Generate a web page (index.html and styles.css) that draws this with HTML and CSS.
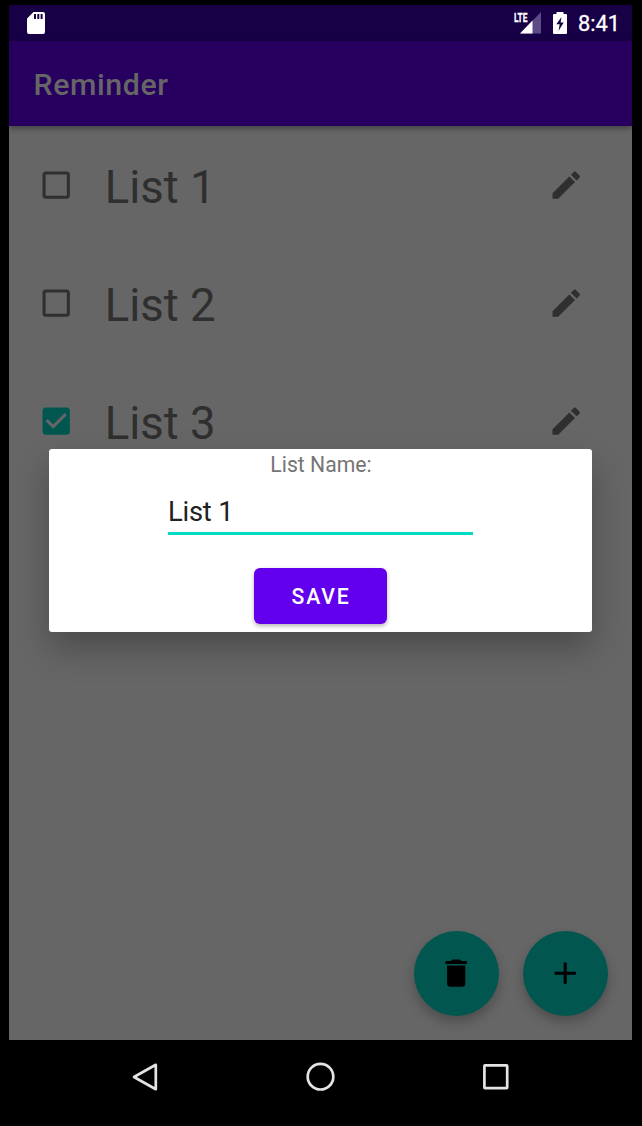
FILE: index.html
```
<!DOCTYPE html>
<html lang="en">
<head>
<meta charset="utf-8">
<title>Reminder</title>
<link rel="stylesheet" href="styles.css">
</head>
<body>
<div class="phone">
  <div class="screen">
    <div class="statusbar">
      <svg class="sd" viewBox="0 0 18 22"><path fill="#fff" fill-rule="evenodd" d="M6.500 0H16a2 2 0 0 1 2 2v18a2 2 0 0 1-2 2H2a2 2 0 0 1-2-2V6.500zM7 2v5h2V2zM10.300 2v5h2V2zM13.600 2v5h2V2z"/></svg>
      <div class="status-right">
        <div class="signal">
          <svg viewBox="0 0 22 22"><path fill="#5c4b85" d="M21 0v21.500H0z"/><path fill="#fff" d="M12.500 8.500v13H0z"/></svg>
          <span class="lte">LTE</span>
        </div>
        <svg class="battery" viewBox="0 0 14 22"><path fill="#fff" fill-rule="evenodd" d="M3.500 0h7v2H13a1 1 0 0 1 1 1v18a1 1 0 0 1-1 1H1a1 1 0 0 1-1-1V3a1 1 0 0 1 1-1h2.500zM8.500 5L3.300 12.300h3.400L5.500 19l5.200-8.500H7.600z"/></svg>
        <span class="clock">8:41</span>
      </div>
    </div>
    <header class="appbar"><h1>Reminder</h1></header>
    <main class="content">
      <div class="row">
        <svg class="icon" viewBox="0 0 24 24"><path d="M19 5v14H5V5h14m0-2H5c-1.100 0-2 .9-2 2v14c0 1.100.9 2 2 2h14c1.100 0 2-.9 2-2V5c0-1.100-.9-2-2-2z"/></svg>
        <span class="name">List 1</span>
        <svg class="icon" viewBox="0 0 24 24"><path d="M3 17.250V21h3.750L17.810 9.940l-3.750-3.750L3 17.250zM20.710 7.040c.39-.39.39-1.020 0-1.410l-2.340-2.340c-.39-.39-1.020-.39-1.410 0l-1.830 1.830 3.750 3.750 1.830-1.830z"/></svg>
      </div>
      <div class="row">
        <svg class="icon" viewBox="0 0 24 24"><path d="M19 5v14H5V5h14m0-2H5c-1.100 0-2 .9-2 2v14c0 1.100.9 2 2 2h14c1.100 0 2-.9 2-2V5c0-1.100-.9-2-2-2z"/></svg>
        <span class="name">List 2</span>
        <svg class="icon" viewBox="0 0 24 24"><path d="M3 17.250V21h3.750L17.810 9.940l-3.750-3.750L3 17.250zM20.710 7.040c.39-.39.39-1.020 0-1.410l-2.340-2.340c-.39-.39-1.020-.39-1.410 0l-1.830 1.830 3.750 3.750 1.830-1.830z"/></svg>
      </div>
      <div class="row">
        <svg class="icon checked" viewBox="0 0 24 24"><path d="M19 3H5c-1.110 0-2 .9-2 2v14c0 1.100.89 2 2 2h14c1.110 0 2-.9 2-2V5c0-1.100-.89-2-2-2zm-9 14l-5-5 1.410-1.410L10 14.170l7.590-7.590L19 8l-9 9z"/></svg>
        <span class="name">List 3</span>
        <svg class="icon" viewBox="0 0 24 24"><path d="M3 17.250V21h3.750L17.810 9.940l-3.750-3.750L3 17.250zM20.710 7.040c.39-.39.39-1.020 0-1.410l-2.340-2.340c-.39-.39-1.020-.39-1.410 0l-1.830 1.830 3.750 3.750 1.830-1.830z"/></svg>
      </div>
      <div class="fabs">
        <div class="fab"><svg viewBox="0 0 24 24"><path d="M6 19c0 1.100.9 2 2 2h8c1.100 0 2-.9 2-2V7H6v12zM19 4h-3.500l-1-1h-5l-1 1H5v2h14V4z"/></svg></div>
        <div class="fab"><svg viewBox="0 0 24 24"><path d="M19 13h-6v6h-2v-6H5v-2h6V5h2v6h6v2z"/></svg></div>
      </div>
    </main>
    <div class="dialog">
      <label class="label" for="list-name">List Name:</label>
      <input class="field" id="list-name" type="text" value="List 1">
      <button class="save" type="button">SAVE</button>
    </div>
  </div>
  <nav class="navbar">
    <svg viewBox="0 0 30 30"><path d="M4 15L25.800 2.800v24.400z"/></svg>
    <svg viewBox="0 0 30 30"><circle cx="14.500" cy="14.700" r="12.800"/></svg>
    <svg viewBox="0 0 30 30"><rect x="3.400" y="3.300" width="22.800" height="22.800" rx=".6"/></svg>
  </nav>
</div>
</body>
</html>
```
FILE: styles.css
```
* { box-sizing: border-box; }
body {
  margin: 0;
  background: #000;
  font-family: Roboto, "Noto Sans", sans-serif;
}
svg { display: block; flex: none; }
.phone {
  width: 642px;
  height: 1126px;
  padding: 5px 10px 0 9px;
  overflow: hidden;
}
.screen {
  position: relative;
  height: 1035px;
  display: flex;
  flex-direction: column;
  overflow: hidden;
  background: #666;
}
.statusbar {
  height: 36px;
  padding: 0 12px 0 18px;
  display: flex;
  align-items: center;
  justify-content: space-between;
  background: #180046;
}
.sd { width: 18px; height: 22px; }
.status-right { display: flex; align-items: center; }
.signal { position: relative; width: 27px; height: 22px; margin-right: 12px; }
.signal svg { width: 22px; height: 22px; margin-left: 6px; }
.lte {
  position: absolute;
  left: 0;
  top: -1px;
  font-size: 13px;
  line-height: 14px;
  font-weight: 700;
  color: #fff;
  -webkit-text-stroke: .3px #fff;
  transform: scaleX(.64);
  transform-origin: left;
}
.battery { width: 14px; height: 22px; margin-right: 11px; }
.clock { font-size: 21.800px; line-height: 36px; font-weight: 400; -webkit-text-stroke: .3px #fff; color: #fff; padding-top: 2px; height: 38px; }
.appbar {
  position: relative;
  height: 85px;
  padding: 0 24.500px;
  display: flex;
  align-items: center;
  background: #27005f;
  box-shadow: 0 2px 6px rgba(0, 0, 0, .4);
}
.appbar h1 {
  margin: 3px 0 0;
  font-size: 30.300px;
  line-height: 36px;
  font-weight: 500;
  letter-spacing: .6px;
  color: #666;
}
.content {
  flex: 1;
  display: flex;
  flex-direction: column;
  padding-top: .6px;
}
.row {
  height: 117.700px;
  padding: 0 48px 0 28.600px;
  display: flex;
  align-items: center;
}
.icon { width: 36.400px; height: 36.400px; fill: #2f2f2f; }
.checked { fill: #01574f; }
.name { flex: 1; padding: 6px 0 0 30.700px; font-size: 45.500px; line-height: 54px; color: #2f2f2f; }
.fabs {
  margin-top: auto;
  padding: 0 24px 24px 0;
  display: flex;
  justify-content: flex-end;
  gap: 24px;
}
.fab {
  width: 85px;
  height: 85px;
  border-radius: 50%;
  display: flex;
  align-items: center;
  justify-content: center;
  background: #01574f;
  box-shadow: 0 6px 12px rgba(0, 0, 0, .25);
}
.fab svg { width: 36.400px; height: 36.400px; fill: #000; }
.dialog {
  position: absolute;
  left: 40px;
  top: 444px;
  width: 543px;
  height: 183px;
  display: flex;
  flex-direction: column;
  align-items: center;
  border-radius: 3px;
  background: #fff;
  box-shadow: 0 16px 34px rgba(0, 0, 0, .27);
}
.label { padding: 3px 0 0 1px; font-size: 21.200px; line-height: 25px; color: #757575; }
.field {
  width: 305px;
  height: 44px;
  margin-top: 14px;
  padding: 0;
  border: 0;
  border-bottom: 3px solid #03dac5;
  outline: 0;
  background: none;
  font: 27.300px/32px Roboto, "Noto Sans", sans-serif;
  letter-spacing: -.2px;
  color: #212121;
}
.save {
  width: 133px;
  height: 56px;
  margin-top: 33px;
  padding: 0 0 0 1px;
  border: 0;
  border-radius: 6px;
  background: #6200ee;
  box-shadow: 0 2px 4px rgba(0, 0, 0, .3);
  font: 500 21.200px/25px Roboto, "Noto Sans", sans-serif;
  letter-spacing: 1.800px;
  color: #fff;
}
.navbar {
  height: 73px;
  padding: 0 121px;
  display: flex;
  align-items: center;
  justify-content: space-between;
}
.navbar svg { width: 30px; height: 30px; fill: none; stroke: #e4e4e4; stroke-width: 2.700; stroke-linejoin: round; }
```
